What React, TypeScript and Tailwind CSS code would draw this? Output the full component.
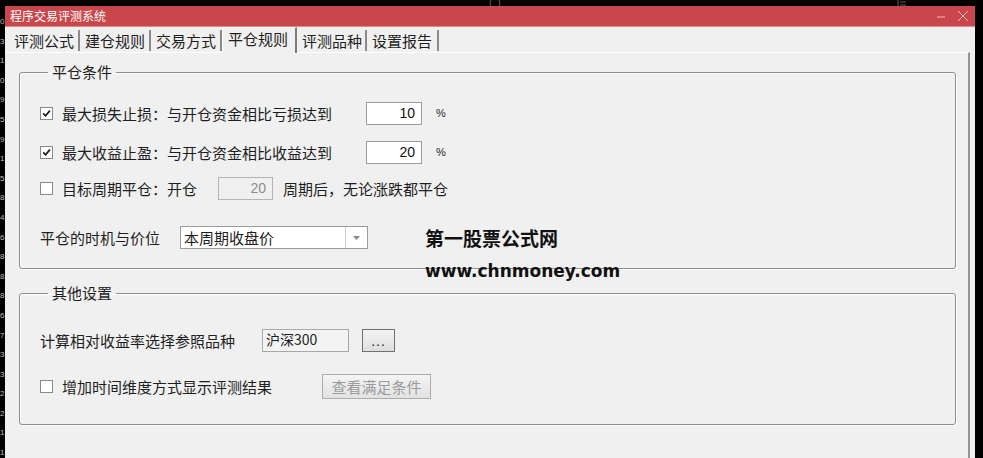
import React from 'react';

const tabs = [
  { label: '评测公式', w: 'w-[71px]' },
  { label: '建仓规则', w: 'w-[71px]' },
  { label: '交易方式', w: 'w-[71px]' },
  { label: '平仓规则', w: 'w-[75px]', active: true },
  { label: '评测品种', w: 'w-[70px]' },
  { label: '设置报告', w: 'w-[72px]' },
];

const axisDigits = '03109591584688867332211'.split('');

function Check({ checked }: { checked?: boolean }) {
  return (
    <span className="w-[13px] h-[13px] shrink-0 border border-[#8a8a8a] bg-white flex items-center justify-center">
      {checked && (
        <svg width="9" height="9" viewBox="0 0 9 9" aria-hidden="true">
          <path d="M1.2 4.4 L3.6 6.8 L7.9 1.6" stroke="#1a1a1a" strokeWidth="1.7" fill="none" />
        </svg>
      )}
    </span>
  );
}

function NumBox({ value, disabled }: { value: string; disabled?: boolean }) {
  return (
    <span
      className={`h-[23px] flex items-center justify-end pr-[6px] border font-['Liberation_Sans',sans-serif] text-[14px] ${
        disabled ? 'w-[55px] bg-[#f0f0f0] border-[#b4b4b4] text-[#8c8c8c]' : 'w-[56px] bg-white border-[#9c9c9c] text-[#111]'
      }`}
    >
      {value}
    </span>
  );
}

function Group({ title, children, className }: { title: string; children: React.ReactNode; className?: string }) {
  return (
    <fieldset
      className={`ml-[14px] mr-[12px] border border-[#8e8e8e] rounded-[3px] pl-[20px] shadow-[inset_1px_1px_0_#ffffff,1px_1px_0_#ffffff] ${className ?? ''}`}
    >
      <legend className="ml-[8px] px-[4px] text-[15px] leading-[20px] text-[#1e1e1e]">{title}</legend>
      {children}
    </fieldset>
  );
}

export default function App() {
  return (
    <div className="relative w-[983px] h-[458px] bg-black flex flex-col overflow-hidden font-['Noto_Sans_CJK_SC',sans-serif]">
      {/* strip of the chart behind the window */}
      <div className="h-[6px] shrink-0 flex items-start">
        <svg className="ml-[489px]" width="12" height="6" viewBox="0 0 12 6" aria-hidden="true">
          <path d="M2 0 Q0 3 2 6 M10 0 Q12 3 10 6" stroke="#5e5e5e" strokeWidth="1" fill="none" />
        </svg>
        <svg className="ml-[396px]" width="10" height="6" viewBox="0 0 10 6" aria-hidden="true">
          <path d="M1 0 V6 M3 2 H9 M3 5 H9" stroke="#5e5e5e" strokeWidth="1" fill="none" />
        </svg>
      </div>

      <div className="flex flex-1 min-h-0">
        <div className="w-[5px] shrink-0 flex flex-col pt-[6px]">
          {axisDigits.map((d, i) => (
            <span key={i} className="font-['Liberation_Sans',sans-serif] text-[8px] leading-[19.6px] text-[#bdbdbd]">
              {d}
            </span>
          ))}
        </div>

        {/* dialog */}
        <div className="w-[970px] shrink-0 flex flex-col">
          <div className="h-[21px] shrink-0 bg-[#c9464b] border-b border-[#dc8a8d] flex items-center pl-[5px] pr-[6px]">
            <span className="text-[12px] leading-[14px] text-white">程序交易评测系统</span>
            <div className="ml-auto flex items-center gap-[11px]">
              <svg width="10" height="10" viewBox="0 0 10 10" aria-hidden="true">
                <path d="M1 6 H9" stroke="#f1b9bb" strokeWidth="1" />
              </svg>
              <svg width="12" height="12" viewBox="0 0 12 12" aria-hidden="true">
                <path d="M1 1 L11 11 M11 1 L1 11" stroke="#f1b9bb" strokeWidth="1" />
              </svg>
            </div>
          </div>

          <div className="flex-1 min-h-0 bg-[#f0f0f0] flex flex-col">
            {/* tabs */}
            <div className="h-[25px] shrink-0 flex items-end pl-[4px]">
              {tabs.map((t) =>
                t.active ? (
                  <div
                    key={t.label}
                    className={`${t.w} h-[26px] -mb-px relative z-10 bg-[#f0f0f0] border-l border-t border-white border-r-2 border-r-[#7d7d7d] pl-[5px] text-[15px] leading-[22px] text-[#1e1e1e]`}
                  >
                    {t.label}
                  </div>
                ) : (
                  <div
                    key={t.label}
                    className={`${t.w} h-[21px] mb-[1px] border-r-2 border-r-[#8a8a8a] pl-[5px] text-[15px] leading-[22px] text-[#1e1e1e]`}
                  >
                    {t.label}
                  </div>
                )
              )}
            </div>

            {/* tab page */}
            <div className="flex-1 min-h-0 mr-[5px] border-t border-white border-r-2 border-r-[#959595] pt-[9px] text-[15px] leading-[23px] text-[#1e1e1e]">
              <Group title="平仓条件" className="pb-[19px]">
                <div className="mt-[20px] h-[23px] flex items-center">
                  <Check checked />
                  <span className="ml-[9px] w-[304px]">最大损失止损：与开仓资金相比亏损达到</span>
                  <NumBox value="10" />
                  <span className="ml-[14px] font-['Liberation_Sans',sans-serif] text-[11px]">%</span>
                </div>
                <div className="mt-[16px] h-[23px] flex items-center">
                  <Check checked />
                  <span className="ml-[9px] w-[304px]">最大收益止盈：与开仓资金相比收益达到</span>
                  <NumBox value="20" />
                  <span className="ml-[14px] font-['Liberation_Sans',sans-serif] text-[11px]">%</span>
                </div>
                <div className="mt-[13px] h-[23px] flex items-center">
                  <Check />
                  <span className="ml-[9px] w-[156px]">目标周期平仓：开仓</span>
                  <NumBox value="20" disabled />
                  <span className="ml-[10px]">周期后，无论涨跌都平仓</span>
                </div>
                <div className="mt-[26px] h-[23px] flex items-center">
                  <span className="w-[140px]">平仓的时机与价位</span>
                  <div className="w-[188px] h-[23px] bg-white border border-[#9c9c9c] flex">
                    <span className="flex-1 pl-[3px] leading-[21px]">本周期收盘价</span>
                    <span className="w-[22px] border-l border-[#cfcfcf] flex items-center justify-center">
                      <svg width="7" height="4" viewBox="0 0 7 4" aria-hidden="true">
                        <path d="M0 0 H7 L3.5 4 Z" fill="#8a8a8a" />
                      </svg>
                    </span>
                  </div>
                </div>
              </Group>

              <Group title="其他设置" className="mt-[14px] pb-[25px]">
                <div className="mt-[26px] h-[23px] flex items-center">
                  <span className="w-[222px]">计算相对收益率选择参照品种</span>
                  <span className="w-[87px] h-[23px] bg-[#f3f3f3] border border-[#a8a8a8] pl-[3px] text-[14px] leading-[18px]">
                    沪深300
                  </span>
                  <span className="ml-[13px] w-[33px] h-[23px] border border-[#707070] bg-gradient-to-b from-[#f4f4f4] to-[#dedede] flex items-end justify-center pb-[4px] font-['Liberation_Sans',sans-serif] text-[14px] leading-[12px] tracking-[1px]">
                    ...
                  </span>
                </div>
                <div className="mt-[22px] h-[25px] flex items-center">
                  <Check />
                  <span className="ml-[9px] w-[260px]">增加时间维度方式显示评测结果</span>
                  <span className="w-[109px] h-[25px] border border-[#adadad] bg-gradient-to-b from-[#f4f4f4] to-[#e2e2e2] flex items-center justify-center text-[#9b9b9b]">
                    查看满足条件
                  </span>
                </div>
              </Group>
            </div>
          </div>
        </div>

        <div className="flex-1 bg-black" />
      </div>

      {/* watermark drawn over the dialog */}
      <div className="absolute left-[425px] top-[226px] text-[19px] leading-[24px] font-bold text-[#111]">
        第一股票公式网
      </div>
      <div className="absolute left-[425px] top-[259px] font-['DejaVu_Sans',sans-serif] text-[17px] leading-[24px] font-bold text-[#111]">
        www.chnmoney.com
      </div>
    </div>
  );
}
